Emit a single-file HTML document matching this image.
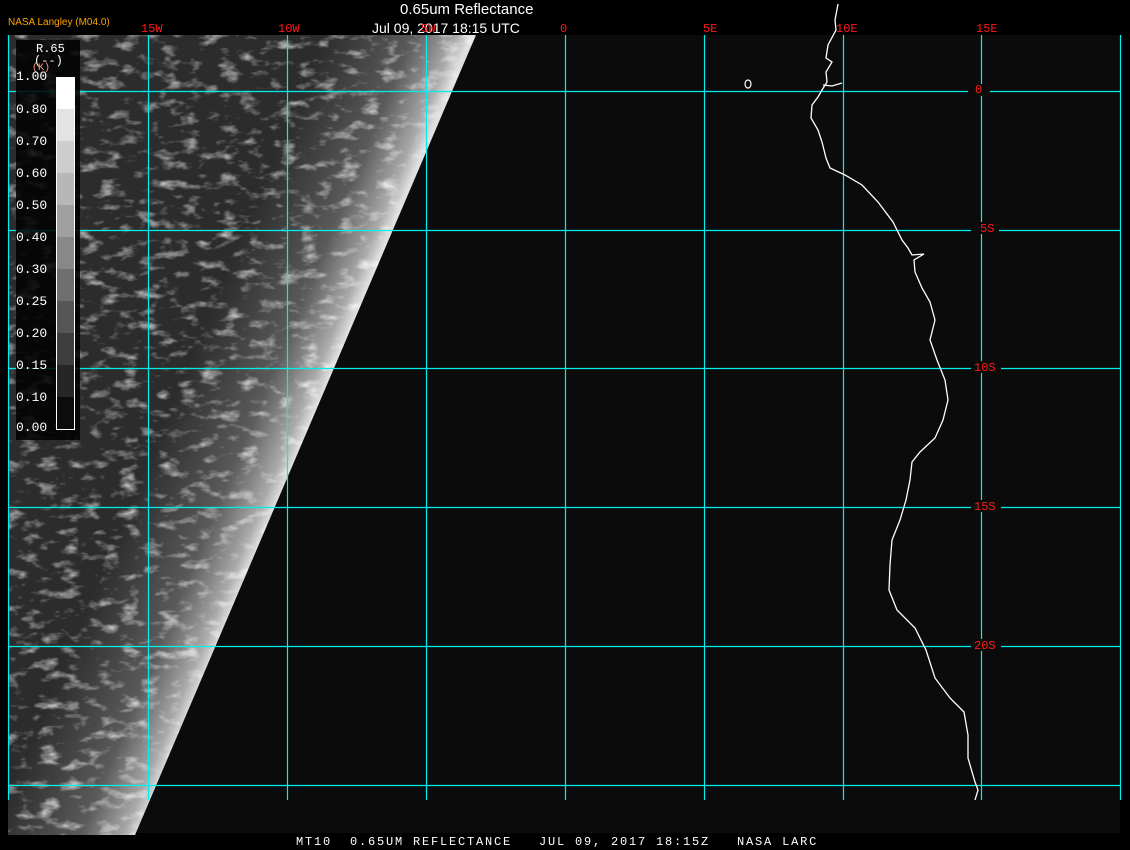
<!DOCTYPE html>
<html><head><style>
html,body{margin:0;padding:0;background:#000;width:1130px;height:850px;overflow:hidden;position:relative;font-family:"Liberation Sans",sans-serif}
.t{position:absolute;white-space:pre}
.r{color:#ff1a1a;font-family:"Liberation Mono",monospace;font-size:12px}
.lg{position:absolute;left:16px;color:#fff;font-family:"Liberation Mono",monospace;font-size:13px}
</style></head><body>
<svg width="1130" height="850" style="position:absolute;left:0;top:0">
<defs>
<linearGradient id="g" gradientUnits="userSpaceOnUse" x1="180" y1="383" x2="305" y2="435">
<stop offset="0" stop-color="#2c2c2c"/><stop offset="0.6" stop-color="#5a5a5a"/><stop offset="0.9" stop-color="#aaaaaa"/><stop offset="1" stop-color="#e0e0e0"/>
</linearGradient>
<filter id="n" x="0" y="0" width="1" height="1">
<feTurbulence type="fractalNoise" baseFrequency="0.05 0.1" numOctaves="3" seed="4"/>
<feColorMatrix values="0 0 0 0 1  0 0 0 0 1  0 0 0 0 1  2.2 0 0 0 -1.15"/>
<feComposite in2="SourceGraphic" operator="in"/>
</filter>
<clipPath id="c"><polygon points="8,35 476,35 135,835 8,835"/></clipPath>
</defs>
<rect x="8" y="35" width="1112" height="798" fill="#0b0b0b"/>
<polygon points="8,35 476,35 135,835 8,835" fill="#222"/>
<polygon points="8,35 476,35 135,835 8,835" fill="url(#g)"/>
<g clip-path="url(#c)"><rect x="8" y="35" width="470" height="800" fill="#fff" filter="url(#n)" opacity="0.85"/></g>
<g stroke="#00f0f0" stroke-width="1.2">
<line x1="8.5" y1="35" x2="8.5" y2="800"/><line x1="148.5" y1="35" x2="148.5" y2="800"/><line x1="287.5" y1="35" x2="287.5" y2="800"/><line x1="426.5" y1="35" x2="426.5" y2="800"/><line x1="565.5" y1="35" x2="565.5" y2="800"/><line x1="704.5" y1="35" x2="704.5" y2="800"/><line x1="843.5" y1="35" x2="843.5" y2="800"/><line x1="981.5" y1="35" x2="981.5" y2="800"/><line x1="1120.5" y1="35" x2="1120.5" y2="800"/>
<line x1="8" y1="91.5" x2="1120" y2="91.5"/><line x1="8" y1="230.5" x2="1120" y2="230.5"/><line x1="8" y1="368.5" x2="1120" y2="368.5"/><line x1="8" y1="507.5" x2="1120" y2="507.5"/><line x1="8" y1="646.5" x2="1120" y2="646.5"/><line x1="8" y1="785.5" x2="1120" y2="785.5"/>
</g>
<g fill="#0b0b0b"><rect x="968" y="84" width="22" height="12"/><rect x="971" y="222" width="28" height="12"/><rect x="971" y="361" width="30" height="12"/><rect x="971" y="500" width="30" height="12"/><rect x="971" y="639" width="30" height="12"/></g>
<polyline fill="none" stroke="#fff" stroke-width="1.3" points="838,4 835,20 836,30 828,45 826,58 832,62 826,72 827,82 822,90 818,97 812,105 811,118 818,130 822,142 826,158 830,168 845,175 862,185 878,202 893,222 902,240 908,248 912,255 924,254 914,260 915,272 922,288 930,302 935,320 930,340 937,360 945,380 948,400 943,420 935,438 920,452 912,462 910,480 906,500 900,520 892,540 890,565 889,590 897,610 915,628 926,650 935,678 950,698 964,712 968,735 968,758 975,782 978,790 975,800"/>
<polyline fill="none" stroke="#fff" stroke-width="1.3" points="823,85 832,86 842,83"/>
<ellipse cx="748" cy="84" rx="3" ry="4" fill="none" stroke="#fff" stroke-width="1.2"/>
<rect x="16" y="40" width="64" height="400" fill="#000" opacity="0.85"/>
<g>
<rect x="56" y="77" width="19" height="32" fill="#fff"/>
<rect x="56" y="109" width="19" height="32" fill="#e3e3e3"/>
<rect x="56" y="141" width="19" height="32" fill="#cdcdcd"/>
<rect x="56" y="173" width="19" height="32" fill="#b7b7b7"/>
<rect x="56" y="205" width="19" height="32" fill="#a0a0a0"/>
<rect x="56" y="237" width="19" height="32" fill="#888"/>
<rect x="56" y="269" width="19" height="32" fill="#6f6f6f"/>
<rect x="56" y="301" width="19" height="32" fill="#565656"/>
<rect x="56" y="333" width="19" height="32" fill="#3d3d3d"/>
<rect x="56" y="365" width="19" height="32" fill="#262626"/>
<rect x="56" y="397" width="19" height="33" fill="#0c0c0c"/>
<rect x="56.5" y="77.5" width="18" height="352" fill="none" stroke="#fff"/>
</g>
</svg>
<div class="t" style="left:400px;top:1px;color:#fff;font-size:15px">0.65um Reflectance</div>
<div class="t" style="left:372px;top:20px;color:#fff;font-size:14px">Jul 09, 2017 18:15 UTC</div>
<div class="t" style="left:8px;top:17px;color:#ffa500;font-size:10px">NASA Langley (M04.0)</div>
<div class="t r" style="left:141px;top:22px">15W</div>
<div class="t r" style="left:278px;top:22px">10W</div>
<div class="t r" style="left:421px;top:22px">5W</div>
<div class="t r" style="left:560px;top:22px">0</div>
<div class="t r" style="left:703px;top:22px">5E</div>
<div class="t r" style="left:836px;top:22px">10E</div>
<div class="t r" style="left:976px;top:22px">15E</div>
<div class="t r" style="left:975px;top:83px">0</div>
<div class="t r" style="left:980px;top:222px">5S</div>
<div class="t r" style="left:974px;top:361px">10S</div>
<div class="t r" style="left:974px;top:500px">15S</div>
<div class="t r" style="left:974px;top:639px">20S</div>
<div class="lg" style="left:36px;top:42px;font-size:12px">R.65</div>
<div class="lg" style="left:34px;top:54px;font-size:12px">(--)</div>
<div class="lg" style="left:32px;top:63px;font-size:10px;color:#f97">(K)</div>
<div class="lg" style="top:69px">1.00</div>
<div class="lg" style="top:102px">0.80</div>
<div class="lg" style="top:134px">0.70</div>
<div class="lg" style="top:166px">0.60</div>
<div class="lg" style="top:198px">0.50</div>
<div class="lg" style="top:230px">0.40</div>
<div class="lg" style="top:262px">0.30</div>
<div class="lg" style="top:294px">0.25</div>
<div class="lg" style="top:326px">0.20</div>
<div class="lg" style="top:358px">0.15</div>
<div class="lg" style="top:390px">0.10</div>
<div class="lg" style="top:420px">0.00</div>
<div class="t" style="left:296px;top:835px;color:#fff;font-family:'Liberation Mono',monospace;font-size:12px;letter-spacing:1.8px">MT10  0.65UM REFLECTANCE   JUL 09, 2017 18:15Z   NASA LARC</div>
</body></html>
